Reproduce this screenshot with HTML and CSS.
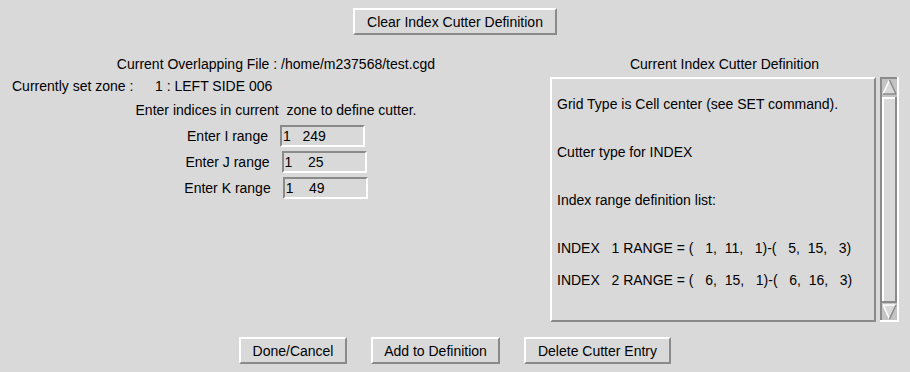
FILE: index.html
```html
<!DOCTYPE html>
<html lang="en">
<head>
  <meta charset="UTF-8">
  <title>Index Cutter Definition</title>
  <link rel="stylesheet" href="styles.css">
</head>
<body>
  <div class="top">
    <button class="btn btn-clear">Clear Index Cutter Definition</button>
  </div>

  <div class="main">
    <div class="left">
      <div class="line center">Current Overlapping File : /home/m237568/test.cgd</div>
      <div class="line zone"><span class="zone-label">Currently set zone :</span><span>1 : LEFT SIDE 006</span></div>
      <div class="line center hint">Enter indices in current &nbsp;zone to define cutter.</div>

      <div class="ranges">
        <div class="range">
          <label>Enter I range</label>
          <div class="entry">1   249</div>
        </div>
        <div class="range">
          <label>Enter J range</label>
          <div class="entry">1    25</div>
        </div>
        <div class="range">
          <label>Enter K range</label>
          <div class="entry">1    49</div>
        </div>
      </div>
    </div>

    <div class="right">
      <div class="line center">Current Index Cutter Definition</div>
      <div class="panel">
        <div class="textbox">
          <div class="tl">Grid Type is Cell center (see SET command).</div>
          <div class="tl gap">Cutter type for INDEX</div>
          <div class="tl gap">Index range definition list:</div>
          <div class="tl gap">INDEX   1 RANGE = (   1,  11,   1)-(   5,  15,   3)</div>
          <div class="tl gap2">INDEX   2 RANGE = (   6,  15,   1)-(   6,  16,   3)</div>
        </div>
        <svg class="scrollbar" width="19" height="245" viewBox="0 0 19 245">
          <!-- trough -->
          <rect x="0" y="0" width="19" height="245" fill="#c4c4c4"/>
          <rect x="0" y="0" width="19" height="2" fill="#8a8a8a"/>
          <rect x="0" y="0" width="2" height="245" fill="#8a8a8a"/>
          <rect x="0" y="243" width="19" height="2" fill="#ffffff"/>
          <rect x="17" y="0" width="2" height="245" fill="#ffffff"/>
          <!-- up arrow -->
          <polygon points="9.5,3 3,17 16,17" fill="#d9d9d9"/>
          <line x1="9.5" y1="3" x2="3" y2="17" stroke="#ffffff" stroke-width="1.5"/>
          <line x1="9.5" y1="3" x2="16" y2="17" stroke="#8a8a8a" stroke-width="1.5"/>
          <line x1="3" y1="17" x2="16" y2="17" stroke="#8a8a8a" stroke-width="1.5"/>
          <!-- slider -->
          <rect x="2" y="20" width="15" height="206" fill="#d9d9d9"/>
          <rect x="2" y="20" width="15" height="2" fill="#ffffff"/>
          <rect x="2" y="20" width="2" height="206" fill="#ffffff"/>
          <rect x="2" y="224" width="15" height="2" fill="#8a8a8a"/>
          <rect x="15" y="20" width="2" height="206" fill="#8a8a8a"/>
          <!-- down arrow -->
          <polygon points="3,228 16,228 9.5,242" fill="#d9d9d9"/>
          <line x1="3" y1="228" x2="16" y2="228" stroke="#ffffff" stroke-width="1.5"/>
          <line x1="3" y1="228" x2="9.5" y2="242" stroke="#ffffff" stroke-width="1.5"/>
          <line x1="16" y1="228" x2="9.5" y2="242" stroke="#8a8a8a" stroke-width="1.5"/>
        </svg>
      </div>
    </div>
  </div>

  <div class="bottom">
    <button class="btn btn-done">Done/Cancel</button>
    <button class="btn btn-add">Add to Definition</button>
    <button class="btn btn-delete">Delete Cutter Entry</button>
  </div>
</body>
</html>
```

FILE: styles.css
```css
body {
  margin: 0;
  width: 910px;
  height: 372px;
  background-color: #d9d9d9;
  color: #000;
  font-family: "Liberation Sans", Arial, sans-serif;
  font-size: 14px;
  overflow: hidden;
}
.btn {
  display: block;
  box-sizing: border-box;
  height: 27px;
  padding: 0;
  background-color: #d9d9d9;
  color: #000;
  font-family: inherit;
  font-size: 14px;
  border: 2px solid;
  border-color: #ffffff #8a8a8a #8a8a8a #ffffff;
  border-radius: 0;
}
.top {
  height: 56px;
  box-sizing: border-box;
  padding-top: 8px;
  display: flex;
  justify-content: center;
}
.btn-clear {
  width: 204px;
}
.main {
  display: flex;
  height: 266px;
}
.line {
  height: 16px;
  line-height: 16px;
  white-space: nowrap;
}
.center {
  text-align: center;
}
.left {
  width: 552px;
}
.zone {
  margin-top: 6px;
  padding-left: 12px;
  display: flex;
}
.zone-label {
  width: 143px;
}
.hint {
  margin-top: 8px;
}
.ranges {
  margin-top: 7px;
  display: flex;
  flex-direction: column;
  gap: 4px;
}
.range {
  display: flex;
  justify-content: center;
  align-items: center;
  gap: 12px;
}
.entry {
  box-sizing: border-box;
  width: 85px;
  height: 22px;
  line-height: 18px;
  padding-left: 1px;
  white-space: pre;
  border: 2px solid;
  border-color: #8a8a8a #ffffff #ffffff #8a8a8a;
}
.right {
  width: 349px;
  margin-left: -2px;
}
.panel {
  margin-top: 5px;
  display: flex;
  gap: 4px;
}
.textbox {
  box-sizing: border-box;
  width: 326px;
  height: 245px;
  padding: 17px 0 0 5px;
  border: 2px solid;
  border-color: #ffffff #8a8a8a #8a8a8a #ffffff;
}
.tl {
  height: 16px;
  line-height: 16px;
  white-space: pre;
}
.gap {
  margin-top: 32px;
}
.gap2 {
  margin-top: 16px;
}
.scrollbar {
  display: block;
}
.bottom {
  margin-top: 15px;
  display: flex;
  justify-content: center;
  gap: 24px;
}
.btn-done {
  width: 108px;
}
.btn-add {
  width: 129px;
}
.btn-delete {
  width: 147px;
}
```
